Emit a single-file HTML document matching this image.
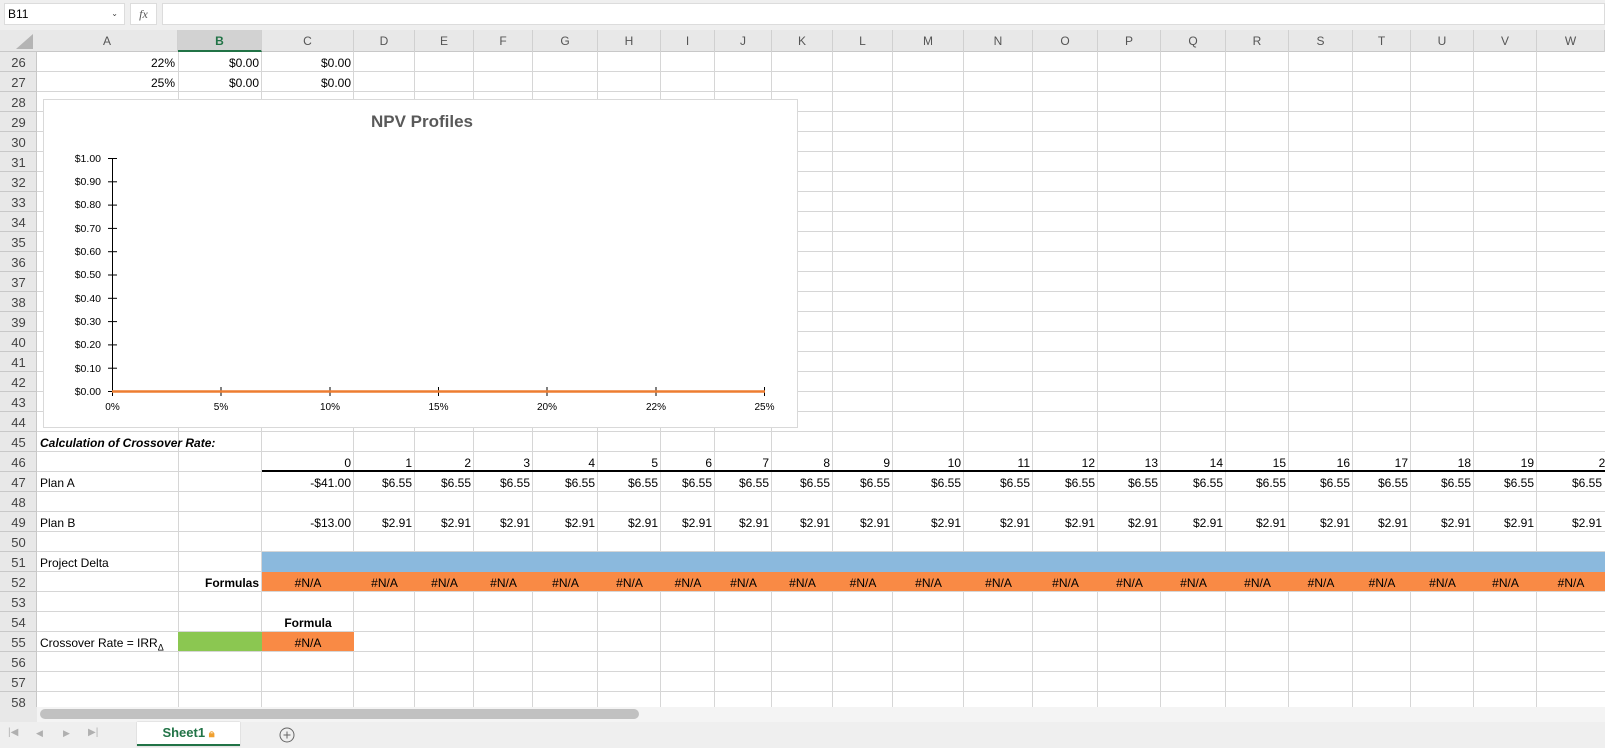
<!DOCTYPE html>
<html><head><meta charset="utf-8">
<style>
*{margin:0;padding:0;box-sizing:border-box}
body{width:1605px;height:748px;overflow:hidden;background:#fff;font-family:"Liberation Sans",Arial,sans-serif;font-size:12px;color:#000;position:relative}
.a{position:absolute}
.vl{position:absolute;top:52px;height:655px;width:1px;background:#d6d6d6}
.row{position:absolute;left:0;width:1605px;height:20px}
.row div{position:absolute;top:0;height:20px;line-height:22px;text-align:right;padding-right:3px;white-space:nowrap;overflow:visible}
.row div.c{text-align:center;padding:0}
.row div.l{text-align:left;padding-left:3px}
.rh{position:absolute;left:0;width:37px;height:20px;line-height:21px;text-align:center;color:#444;font-size:13px}
.ch{position:absolute;top:30px;height:22px;line-height:22px;text-align:center;color:#555;font-size:12px;border-right:1px solid #d0d0d0}
</style></head><body>
<div class="a" style="left:0;top:0;width:1605px;height:30px;background:#efefef"></div>
<div class="a" style="left:4px;top:3px;width:121px;height:22px;background:#fff;border:1px solid #dcdcdc;line-height:20px;padding-left:3px;font-size:12px">B11<span style="position:absolute;right:6px;font-size:8px;color:#444">&#8964;</span></div>
<div class="a" style="left:130px;top:3px;width:27px;height:22px;background:#fff;border:1px solid #dcdcdc;text-align:center;line-height:20px;font-family:'Liberation Serif',serif;font-style:italic;color:#555">fx</div>
<div class="a" style="left:162px;top:3px;width:1443px;height:22px;background:#fff;border:1px solid #dcdcdc"></div>
<div class="a" style="left:0;top:30px;width:1605px;height:22px;background:#e8e8e8;border-bottom:1px solid #c8c8c8"></div>
<svg class="a" style="left:0;top:30px" width="37" height="22"><polygon points="33,4 33,19 16,19" fill="#b4b4b4"/></svg>
<div class="ch" style="left:37px;width:141px">A</div>
<div class="ch" style="left:178px;width:84px;background:#d2d2d2;color:#217346;font-weight:bold;border-bottom:2px solid #217346">B</div>
<div class="ch" style="left:262px;width:92px">C</div>
<div class="ch" style="left:354px;width:61px">D</div>
<div class="ch" style="left:415px;width:59px">E</div>
<div class="ch" style="left:474px;width:59px">F</div>
<div class="ch" style="left:533px;width:65px">G</div>
<div class="ch" style="left:598px;width:63px">H</div>
<div class="ch" style="left:661px;width:54px">I</div>
<div class="ch" style="left:715px;width:57px">J</div>
<div class="ch" style="left:772px;width:61px">K</div>
<div class="ch" style="left:833px;width:60px">L</div>
<div class="ch" style="left:893px;width:71px">M</div>
<div class="ch" style="left:964px;width:69px">N</div>
<div class="ch" style="left:1033px;width:65px">O</div>
<div class="ch" style="left:1098px;width:63px">P</div>
<div class="ch" style="left:1161px;width:65px">Q</div>
<div class="ch" style="left:1226px;width:63px">R</div>
<div class="ch" style="left:1289px;width:64px">S</div>
<div class="ch" style="left:1353px;width:58px">T</div>
<div class="ch" style="left:1411px;width:63px">U</div>
<div class="ch" style="left:1474px;width:63px">V</div>
<div class="ch" style="left:1537px;width:68px">W</div>
<div class="a" style="left:0;top:52px;width:1605px;height:655px;background:repeating-linear-gradient(to bottom,transparent 0,transparent 19px,#d6d6d6 19px,#d6d6d6 20px)"></div>
<div class="a" style="left:0;top:52px;width:37px;height:655px;background:#e8e8e8 repeating-linear-gradient(to bottom,transparent 0,transparent 19px,#c8c8c8 19px,#c8c8c8 20px);border-right:1px solid #c8c8c8"></div>
<div class="vl" style="left:178px"></div><div class="vl" style="left:261px"></div><div class="vl" style="left:353px"></div><div class="vl" style="left:414px"></div><div class="vl" style="left:473px"></div><div class="vl" style="left:532px"></div><div class="vl" style="left:597px"></div><div class="vl" style="left:660px"></div><div class="vl" style="left:714px"></div><div class="vl" style="left:771px"></div><div class="vl" style="left:832px"></div><div class="vl" style="left:892px"></div><div class="vl" style="left:963px"></div><div class="vl" style="left:1032px"></div><div class="vl" style="left:1097px"></div><div class="vl" style="left:1160px"></div><div class="vl" style="left:1225px"></div><div class="vl" style="left:1288px"></div><div class="vl" style="left:1352px"></div><div class="vl" style="left:1410px"></div><div class="vl" style="left:1473px"></div><div class="vl" style="left:1536px"></div>
<div class="rh" style="top:52px">26</div><div class="rh" style="top:72px">27</div><div class="rh" style="top:92px">28</div><div class="rh" style="top:112px">29</div><div class="rh" style="top:132px">30</div><div class="rh" style="top:152px">31</div><div class="rh" style="top:172px">32</div><div class="rh" style="top:192px">33</div><div class="rh" style="top:212px">34</div><div class="rh" style="top:232px">35</div><div class="rh" style="top:252px">36</div><div class="rh" style="top:272px">37</div><div class="rh" style="top:292px">38</div><div class="rh" style="top:312px">39</div><div class="rh" style="top:332px">40</div><div class="rh" style="top:352px">41</div><div class="rh" style="top:372px">42</div><div class="rh" style="top:392px">43</div><div class="rh" style="top:412px">44</div><div class="rh" style="top:432px">45</div><div class="rh" style="top:452px">46</div><div class="rh" style="top:472px">47</div><div class="rh" style="top:492px">48</div><div class="rh" style="top:512px">49</div><div class="rh" style="top:532px">50</div><div class="rh" style="top:552px">51</div><div class="rh" style="top:572px">52</div><div class="rh" style="top:592px">53</div><div class="rh" style="top:612px">54</div><div class="rh" style="top:632px">55</div><div class="rh" style="top:652px">56</div><div class="rh" style="top:672px">57</div><div class="rh" style="top:692px;height:15px;overflow:hidden">58</div>
<div class="a" style="left:262px;top:552px;width:1343px;height:20px;background:#8bb9dd"></div>
<div class="a" style="left:262px;top:572px;width:1343px;height:19px;background:#f98a45"></div>
<div class="a" style="left:178px;top:632px;width:84px;height:19px;background:#8bc751"></div>
<div class="a" style="left:262px;top:632px;width:92px;height:19px;background:#f98a45"></div>
<div class="a" style="left:262px;top:470px;width:1343px;height:2px;background:#000"></div>
<div class="row" style="top:52px"><div style="left:37px;width:141px">22%</div><div style="left:178px;width:84px">$0.00</div><div style="left:262px;width:92px">$0.00</div></div>
<div class="row" style="top:72px"><div style="left:37px;width:141px">25%</div><div style="left:178px;width:84px">$0.00</div><div style="left:262px;width:92px">$0.00</div></div>
<div class="row" style="top:432px"><div class="l" style="left:37px;font-weight:bold;font-style:italic">Calculation of Crossover Rate:</div></div>
<div class="row" style="top:452px"><div style="left:262px;width:92px">0</div><div style="left:354px;width:61px">1</div><div style="left:415px;width:59px">2</div><div style="left:474px;width:59px">3</div><div style="left:533px;width:65px">4</div><div style="left:598px;width:63px">5</div><div style="left:661px;width:54px">6</div><div style="left:715px;width:57px">7</div><div style="left:772px;width:61px">8</div><div style="left:833px;width:60px">9</div><div style="left:893px;width:71px">10</div><div style="left:964px;width:69px">11</div><div style="left:1033px;width:65px">12</div><div style="left:1098px;width:63px">13</div><div style="left:1161px;width:65px">14</div><div style="left:1226px;width:63px">15</div><div style="left:1289px;width:64px">16</div><div style="left:1353px;width:58px">17</div><div style="left:1411px;width:63px">18</div><div style="left:1474px;width:63px">19</div><div style="left:1537px;width:78px">20</div></div>
<div class="row" style="top:472px"><div class="l" style="left:37px">Plan A</div><div style="left:262px;width:92px">-$41.00</div><div style="left:354px;width:61px">$6.55</div><div style="left:415px;width:59px">$6.55</div><div style="left:474px;width:59px">$6.55</div><div style="left:533px;width:65px">$6.55</div><div style="left:598px;width:63px">$6.55</div><div style="left:661px;width:54px">$6.55</div><div style="left:715px;width:57px">$6.55</div><div style="left:772px;width:61px">$6.55</div><div style="left:833px;width:60px">$6.55</div><div style="left:893px;width:71px">$6.55</div><div style="left:964px;width:69px">$6.55</div><div style="left:1033px;width:65px">$6.55</div><div style="left:1098px;width:63px">$6.55</div><div style="left:1161px;width:65px">$6.55</div><div style="left:1226px;width:63px">$6.55</div><div style="left:1289px;width:64px">$6.55</div><div style="left:1353px;width:58px">$6.55</div><div style="left:1411px;width:63px">$6.55</div><div style="left:1474px;width:63px">$6.55</div><div style="left:1537px;width:68px">$6.55</div></div>
<div class="row" style="top:512px"><div class="l" style="left:37px">Plan B</div><div style="left:262px;width:92px">-$13.00</div><div style="left:354px;width:61px">$2.91</div><div style="left:415px;width:59px">$2.91</div><div style="left:474px;width:59px">$2.91</div><div style="left:533px;width:65px">$2.91</div><div style="left:598px;width:63px">$2.91</div><div style="left:661px;width:54px">$2.91</div><div style="left:715px;width:57px">$2.91</div><div style="left:772px;width:61px">$2.91</div><div style="left:833px;width:60px">$2.91</div><div style="left:893px;width:71px">$2.91</div><div style="left:964px;width:69px">$2.91</div><div style="left:1033px;width:65px">$2.91</div><div style="left:1098px;width:63px">$2.91</div><div style="left:1161px;width:65px">$2.91</div><div style="left:1226px;width:63px">$2.91</div><div style="left:1289px;width:64px">$2.91</div><div style="left:1353px;width:58px">$2.91</div><div style="left:1411px;width:63px">$2.91</div><div style="left:1474px;width:63px">$2.91</div><div style="left:1537px;width:68px">$2.91</div></div>
<div class="row" style="top:552px"><div class="l" style="left:37px">Project Delta</div></div>
<div class="row" style="top:572px"><div style="left:178px;width:84px;font-weight:bold">Formulas</div><div class="c" style="left:262px;width:92px">#N/A</div><div class="c" style="left:354px;width:61px">#N/A</div><div class="c" style="left:415px;width:59px">#N/A</div><div class="c" style="left:474px;width:59px">#N/A</div><div class="c" style="left:533px;width:65px">#N/A</div><div class="c" style="left:598px;width:63px">#N/A</div><div class="c" style="left:661px;width:54px">#N/A</div><div class="c" style="left:715px;width:57px">#N/A</div><div class="c" style="left:772px;width:61px">#N/A</div><div class="c" style="left:833px;width:60px">#N/A</div><div class="c" style="left:893px;width:71px">#N/A</div><div class="c" style="left:964px;width:69px">#N/A</div><div class="c" style="left:1033px;width:65px">#N/A</div><div class="c" style="left:1098px;width:63px">#N/A</div><div class="c" style="left:1161px;width:65px">#N/A</div><div class="c" style="left:1226px;width:63px">#N/A</div><div class="c" style="left:1289px;width:64px">#N/A</div><div class="c" style="left:1353px;width:58px">#N/A</div><div class="c" style="left:1411px;width:63px">#N/A</div><div class="c" style="left:1474px;width:63px">#N/A</div><div class="c" style="left:1537px;width:68px">#N/A</div></div>
<div class="row" style="top:612px"><div class="c" style="left:262px;width:92px;font-weight:bold">Formula</div></div>
<div class="row" style="top:632px"><div class="l" style="left:37px">Crossover Rate = IRR<sub style="font-size:9px">&#916;</sub></div><div class="c" style="left:262px;width:92px">#N/A</div></div>
<div class="a" style="left:43px;top:99px;width:755px;height:329px;background:#fff;border:1px solid #d9d9d9">
<svg width="755" height="329" style="position:absolute;left:-1px;top:-1px" font-family="Liberation Sans, sans-serif">
<text x="379" y="28" text-anchor="middle" font-size="17" font-weight="bold" fill="#595959">NPV Profiles</text>
<g font-size="10.5" fill="#000" text-anchor="end">
<text x="58" y="63">$1.00</text><text x="58" y="86">$0.90</text><text x="58" y="109">$0.80</text><text x="58" y="133">$0.70</text><text x="58" y="156">$0.60</text><text x="58" y="179">$0.50</text><text x="58" y="203">$0.40</text><text x="58" y="226">$0.30</text><text x="58" y="249">$0.20</text><text x="58" y="273">$0.10</text><text x="58" y="296">$0.00</text>
</g>
<g stroke="#000" stroke-width="1">
<line x1="69.5" y1="59" x2="69.5" y2="292"/>
<line x1="65" y1="59.5" x2="74" y2="59.5"/><line x1="65" y1="82.8" x2="74" y2="82.8"/><line x1="65" y1="106.1" x2="74" y2="106.1"/><line x1="65" y1="129.4" x2="74" y2="129.4"/><line x1="65" y1="152.7" x2="74" y2="152.7"/><line x1="65" y1="176" x2="74" y2="176"/><line x1="65" y1="199.3" x2="74" y2="199.3"/><line x1="65" y1="222.6" x2="74" y2="222.6"/><line x1="65" y1="245.9" x2="74" y2="245.9"/><line x1="65" y1="269.2" x2="74" y2="269.2"/><line x1="65" y1="292.5" x2="74" y2="292.5"/>
<line x1="69.5" y1="288" x2="69.5" y2="297"/><line x1="178" y1="288" x2="178" y2="297"/><line x1="287" y1="288" x2="287" y2="297"/><line x1="395.5" y1="288" x2="395.5" y2="297"/><line x1="504" y1="288" x2="504" y2="297"/><line x1="613" y1="288" x2="613" y2="297"/><line x1="721.5" y1="288" x2="721.5" y2="297"/>
</g>
<line x1="69" y1="292.5" x2="722" y2="292.5" stroke="#ed7d31" stroke-width="2.5"/>
<g font-size="10" fill="#000" text-anchor="middle">
<text x="69.5" y="311">0%</text><text x="178" y="311">5%</text><text x="287" y="311">10%</text><text x="395.5" y="311">15%</text><text x="504" y="311">20%</text><text x="613" y="311">22%</text><text x="721.5" y="311">25%</text>
</g>
</svg></div>
<div class="a" style="left:0;top:707px;width:1605px;height:15px;background:#f4f4f4"></div>
<div class="a" style="left:0;top:707px;width:37px;height:15px;background:#e8e8e8"></div>
<div class="a" style="left:40px;top:709px;width:599px;height:10px;background:#c1c1c1;border-radius:5px"></div>
<div class="a" style="left:0;top:722px;width:1605px;height:26px;background:#efefef"></div>
<div class="a" style="left:8px;top:727px;color:#b0b0b0;font-size:10px">|&#9664;</div>
<div class="a" style="left:36px;top:728px;color:#b0b0b0;font-size:9px">&#9664;</div>
<div class="a" style="left:63px;top:728px;color:#b0b0b0;font-size:9px">&#9654;</div>
<div class="a" style="left:88px;top:727px;color:#b0b0b0;font-size:10px">&#9654;|</div>
<div class="a" style="left:137px;top:722px;width:103px;height:24px;background:#fff;border-bottom:2px solid #217346;box-shadow:0 0 1px #aaa;text-align:center;line-height:22px;color:#217346;font-weight:bold;font-size:13px">Sheet1 <span style="color:#f0a030;font-size:11px">&#128274;&#xFE0E;</span></div>
<svg class="a" style="left:279px;top:727px" width="16" height="16"><circle cx="8" cy="8" r="7" fill="none" stroke="#666" stroke-width="1"/><line x1="4.5" y1="8" x2="11.5" y2="8" stroke="#666"/><line x1="8" y1="4.5" x2="8" y2="11.5" stroke="#666"/></svg>
</body></html>
